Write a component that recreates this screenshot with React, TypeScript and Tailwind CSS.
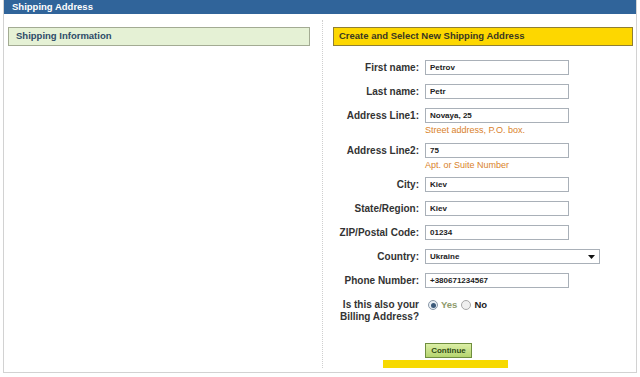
import React from "react";

const font = { fontFamily: '"Liberation Sans", Arial, sans-serif' };

function Field({ label, value, hint, wide }: { label: string; value: string; hint?: string; wide?: boolean }) {
  return (
    <div className="flex">
      <div className="w-[97px] shrink-0 text-right text-[10px] font-bold text-[#333] leading-[15px] pr-[1px]">{label}</div>
      <div className="ml-[5px] flex flex-col">
        <div className={`h-[15px] ${wide ? "w-[175px]" : "w-[144px]"} border border-[#a9b0b8] bg-white flex items-center pl-[4px] text-[8px] font-bold text-[#222] relative`}>
          {value}
          {wide && (
            <svg className="absolute right-[4px] top-[5px]" width="7" height="4" viewBox="0 0 7 4">
              <path d="M0 0 L7 0 L3.5 4 Z" fill="#111" />
            </svg>
          )}
        </div>
        {hint && <div className="text-[9px] leading-[13px] text-[#d9822b] mt-[1px]">{hint}</div>}
      </div>
    </div>
  );
}

export default function App() {
  return (
    <div className="w-[640px] h-[377px] bg-white" style={font}>
      <div className="ml-[3px] w-[634px] h-[373px] border-l border-r border-b border-[#d2d2d2] flex flex-col">
        <div className="h-[14px] bg-[#30649a] flex items-center pl-[8px] text-[9.5px] font-bold text-white">Shipping Address</div>
        <div className="flex flex-1">
          <div className="w-[318px] pl-[4px] pt-[13px]">
            <div className="w-[302px] h-[19px] bg-[#e5f1d5] border border-[#a3ab93] flex items-center pl-[7px] text-[9.5px] font-bold text-[#2d4b68]">
              Shipping Information
            </div>
          </div>
          <div className="flex-1 mt-[6px] mb-[9px] border-l border-dotted border-[#cfcfcf] flex flex-col">
            <div className="ml-[10px] mt-[7px] w-[300px] h-[19px] bg-[#fdd700] border border-[#8f7f33] flex items-center pl-[5px] text-[9.5px] font-bold text-[#3a3822]">
              Create and Select New Shipping Address
            </div>
            <div className="flex flex-col mt-[14px]">
              <Field label="First name:" value="Petrov" />
              <div className="mt-[9px]"><Field label="Last name:" value="Petr" /></div>
              <div className="mt-[9px]"><Field label="Address Line1:" value="Novaya, 25" hint="Street address, P.O. box." /></div>
              <div className="mt-[6px]"><Field label="Address Line2:" value="75" hint="Apt. or Suite Number" /></div>
              <div className="mt-[5px]"><Field label="City:" value="Kiev" /></div>
              <div className="mt-[9px]"><Field label="State/Region:" value="Kiev" /></div>
              <div className="mt-[9px]"><Field label="ZIP/Postal Code:" value="01234" /></div>
              <div className="mt-[9px]"><Field label="Country:" value="Ukraine" wide /></div>
              <div className="mt-[9px]"><Field label="Phone Number:" value="+380671234567" /></div>
              <div className="mt-[11px] flex">
                <div className="w-[97px] shrink-0 text-right text-[10px] font-bold text-[#333] leading-[12px] pr-[1px]">
                  Is this also your<br />Billing Address?
                </div>
                <div className="ml-[5px] flex items-center h-[12px] text-[9.5px] font-bold">
                  <span className="ml-[3px] w-[10px] h-[10px] rounded-full border border-[#8a98a8] bg-[#e8eef4] flex items-center justify-center">
                    <span className="w-[5px] h-[5px] rounded-full bg-[#3c5a7a]" />
                  </span>
                  <span className="ml-[3px] text-[#8e9a6c]">Yes</span>
                  <span className="ml-[4px] w-[10px] h-[10px] rounded-full border border-[#a8a8a8] bg-[#f0f0f0]" />
                  <span className="ml-[3px] text-[#222]">No</span>
                </div>
              </div>
              <div className="mt-[20px] ml-[102px] w-[47px] h-[15px] border border-[#6f8e3f] bg-gradient-to-b from-[#dcefa6] to-[#b5d46e] flex items-center justify-center text-[8px] font-bold text-[#2f4a14]">
                Continue
              </div>
              <div className="mt-[2px] ml-[60px] w-[125px] h-[8px] bg-[#f7d900]" />
            </div>
          </div>
        </div>
      </div>
    </div>
  );
}
